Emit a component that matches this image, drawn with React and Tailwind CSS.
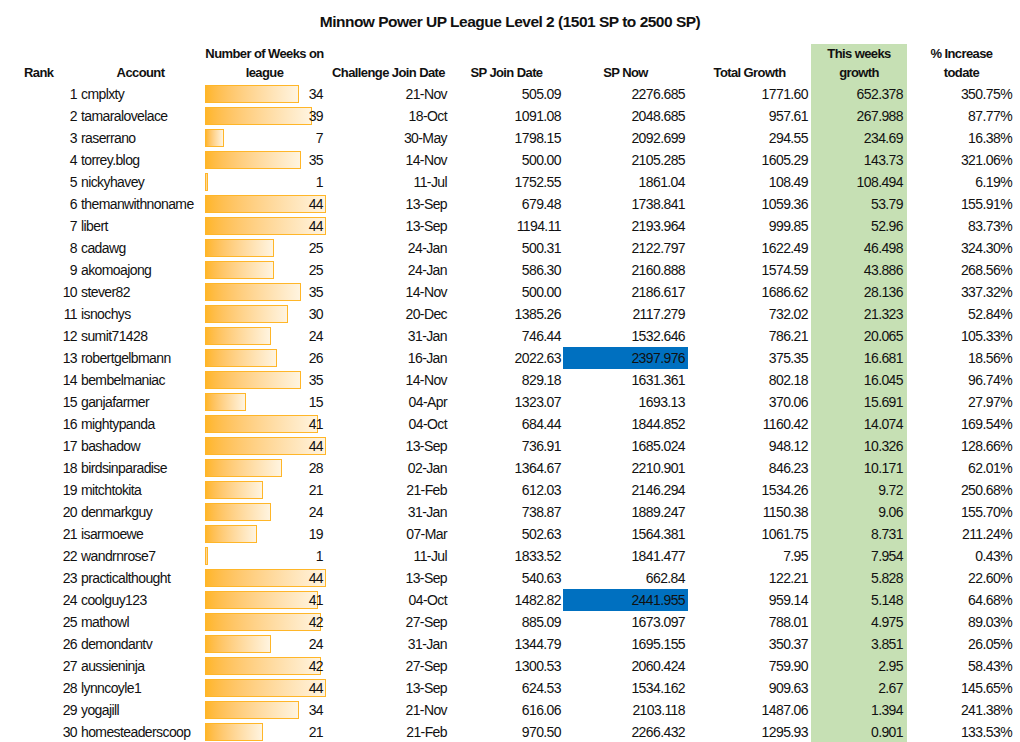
const rows = [
  [1, 'cmplxty', 34, '21-Nov', '505.09', '2276.685', '1771.60', '652.378', '350.75%'],
  [2, 'tamaralovelace', 39, '18-Oct', '1091.08', '2048.685', '957.61', '267.988', '87.77%'],
  [3, 'raserrano', 7, '30-May', '1798.15', '2092.699', '294.55', '234.69', '16.38%'],
  [4, 'torrey.blog', 35, '14-Nov', '500.00', '2105.285', '1605.29', '143.73', '321.06%'],
  [5, 'nickyhavey', 1, '11-Jul', '1752.55', '1861.04', '108.49', '108.494', '6.19%'],
  [6, 'themanwithnoname', 44, '13-Sep', '679.48', '1738.841', '1059.36', '53.79', '155.91%'],
  [7, 'libert', 44, '13-Sep', '1194.11', '2193.964', '999.85', '52.96', '83.73%'],
  [8, 'cadawg', 25, '24-Jan', '500.31', '2122.797', '1622.49', '46.498', '324.30%'],
  [9, 'akomoajong', 25, '24-Jan', '586.30', '2160.888', '1574.59', '43.886', '268.56%'],
  [10, 'stever82', 35, '14-Nov', '500.00', '2186.617', '1686.62', '28.136', '337.32%'],
  [11, 'isnochys', 30, '20-Dec', '1385.26', '2117.279', '732.02', '21.323', '52.84%'],
  [12, 'sumit71428', 24, '31-Jan', '746.44', '1532.646', '786.21', '20.065', '105.33%'],
  [13, 'robertgelbmann', 26, '16-Jan', '2022.63', '2397.976', '375.35', '16.681', '18.56%', true],
  [14, 'bembelmaniac', 35, '14-Nov', '829.18', '1631.361', '802.18', '16.045', '96.74%'],
  [15, 'ganjafarmer', 15, '04-Apr', '1323.07', '1693.13', '370.06', '15.691', '27.97%'],
  [16, 'mightypanda', 41, '04-Oct', '684.44', '1844.852', '1160.42', '14.074', '169.54%'],
  [17, 'bashadow', 44, '13-Sep', '736.91', '1685.024', '948.12', '10.326', '128.66%'],
  [18, 'birdsinparadise', 28, '02-Jan', '1364.67', '2210.901', '846.23', '10.171', '62.01%'],
  [19, 'mitchtokita', 21, '21-Feb', '612.03', '2146.294', '1534.26', '9.72', '250.68%'],
  [20, 'denmarkguy', 24, '31-Jan', '738.87', '1889.247', '1150.38', '9.06', '155.70%'],
  [21, 'isarmoewe', 19, '07-Mar', '502.63', '1564.381', '1061.75', '8.731', '211.24%'],
  [22, 'wandrnrose7', 1, '11-Jul', '1833.52', '1841.477', '7.95', '7.954', '0.43%'],
  [23, 'practicalthought', 44, '13-Sep', '540.63', '662.84', '122.21', '5.828', '22.60%'],
  [24, 'coolguy123', 41, '04-Oct', '1482.82', '2441.955', '959.14', '5.148', '64.68%', true],
  [25, 'mathowl', 42, '27-Sep', '885.09', '1673.097', '788.01', '4.975', '89.03%'],
  [26, 'demondantv', 24, '31-Jan', '1344.79', '1695.155', '350.37', '3.851', '26.05%'],
  [27, 'aussieninja', 42, '27-Sep', '1300.53', '2060.424', '759.90', '2.95', '58.43%'],
  [28, 'lynncoyle1', 44, '13-Sep', '624.53', '1534.162', '909.63', '2.67', '145.65%'],
  [29, 'yogajill', 34, '21-Nov', '616.06', '2103.118', '1487.06', '1.394', '241.38%'],
  [30, 'homesteaderscoop', 21, '21-Feb', '970.50', '2266.432', '1295.93', '0.901', '133.53%'],
]

const cols = 'grid grid-cols-[79px_123px_125px_123px_113px_125px_123px_96px_109px]'
const head = 'flex items-end justify-center text-center whitespace-nowrap pb-[1px]'

export default function App() {
  return (
    <div className="w-[1020px] h-[742px] overflow-hidden bg-white text-[#111] text-[14px] tracking-[-0.6px] font-['Liberation_Sans',Arial,sans-serif]">
      <div className="h-[44px] flex items-center justify-center font-bold text-[15.5px] tracking-[-0.5px]">
        Minnow Power UP League Level 2 (1501 SP to 2500 SP)
      </div>

      <div className={`${cols} h-[39px] font-bold text-[13px] leading-[19px]`}>
        <div className="flex items-end pl-6 pb-[1px]">Rank</div>
        <div className={head}>Account</div>
        <div className={head}>Number of Weeks on<br />league</div>
        <div className={head}>Challenge Join Date</div>
        <div className={head}>SP Join Date</div>
        <div className={head}>SP Now</div>
        <div className={head}>Total Growth</div>
        <div className={`${head} bg-[#c6e0b4]`}>This weeks<br />growth</div>
        <div className={head}>% Increase<br />todate</div>
      </div>

      {rows.map((r) => (
        <div key={r[0]} className={`${cols} h-[22px] leading-[22px]`}>
          <div className="text-right pr-[2px]">{r[0]}</div>
          <div className="pl-[2px] whitespace-nowrap">{r[1]}</div>
          <div className="relative pl-[3px] py-[2px]">
            <div
              className="h-full border border-[#ffb628] bg-gradient-to-r from-[#ffb628] to-[#fff4e0]"
              style={{ width: `${(r[2] / 44) * 121}px` }}
            />
            <span className="absolute right-[4px] top-0">{r[2]}</span>
          </div>
          <div className="text-right pr-[3px]">{r[3]}</div>
          <div className="text-right pr-[2px]">{r[4]}</div>
          <div className={`text-right pr-[3px] ${r[9] ? 'bg-[#0070c0]' : ''}`}>{r[5]}</div>
          <div className="text-right pr-[3px]">{r[6]}</div>
          <div className="text-right pr-[4px] bg-[#c6e0b4]">{r[7]}</div>
          <div className="text-right pr-[4px]">{r[8]}</div>
        </div>
      ))}
    </div>
  )
}
